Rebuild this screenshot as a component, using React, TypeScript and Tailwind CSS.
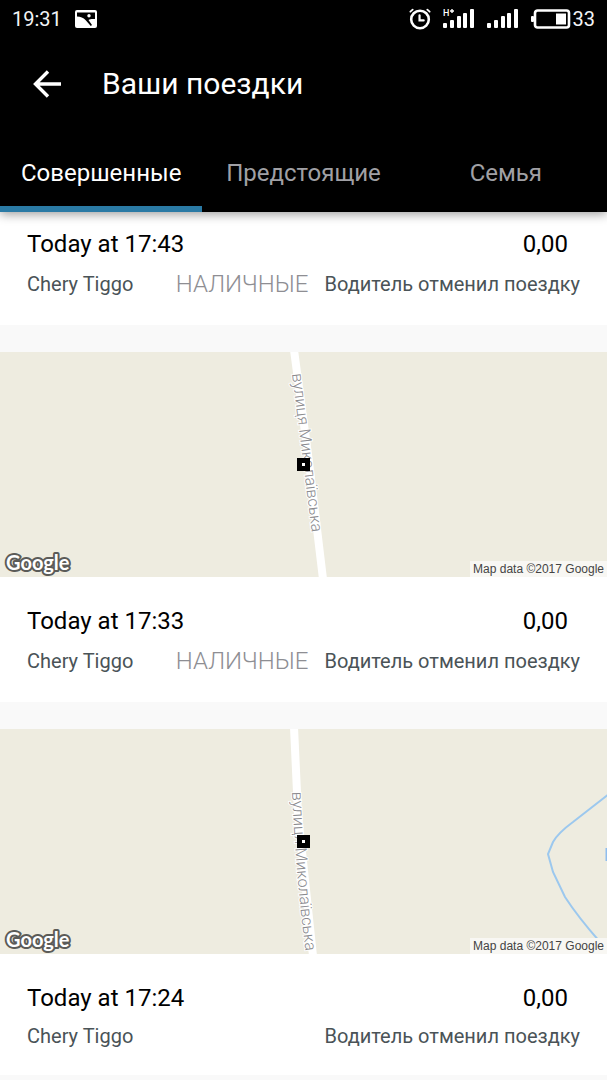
import React, { useState } from 'react';

type Trip = {
    time: string;
    price: string;
    car: string;
    payment?: string;
    status: string;
    map?: React.ReactNode;
};

const TABS = ['Совершенные', 'Предстоящие', 'Семья'];

const SignalBars = ({ network }: { network?: string }) => (
    <svg width="32" height="22" viewBox="0 0 32 22" fill="#fff" aria-hidden="true">
        {network && (
            <>
                <text x="0" y="8" fontSize="9" fontWeight="500">{network}</text>
                <path d="M7 3h4M9 1v4" stroke="#fff" strokeWidth="1.400" />
            </>
        )}
        <rect x="0" y="15" width="4" height="5" rx="1" />
        <rect x="7" y="12" width="4" height="8" rx="1" />
        <rect x="14" y="8" width="4" height="12" rx="1" />
        <rect x="20" y="5" width="4" height="15" rx="1" />
        <rect x="27" y="1" width="4" height="19" rx="1" />
    </svg>
);

const StatusBar = () => (
    <div className="flex h-[38px] items-center px-3 text-xl text-gray-100">
        <span>19:31</span>
        <svg className="ml-3" width="24" height="20" viewBox="0 0 24 20" aria-hidden="true">
            <rect x="1" y="1" width="22" height="18" rx="2" fill="#fff" />
            <path d="M3 3.500h18v6.500c-3-.3-5 0-6.500 1l3.500 5-1.200 1-5.300-6C9.500 9 6.500 7.600 3 7.600z" fill="#000" />
            <circle cx="15" cy="6.800" r="1.700" fill="#fff" />
        </svg>
        <div className="ml-auto flex items-center">
            <svg width="22" height="22" viewBox="0 0 24 24" fill="none" stroke="#fff" strokeLinecap="round" aria-hidden="true">
                <circle cx="12" cy="12.500" r="9.600" strokeWidth="2.800" />
                <path d="M11.500 8v5.500H16" strokeWidth="2.400" />
                <path d="M1.500 4 4 1.800M22.500 4 20 1.800" strokeWidth="2" />
            </svg>
            <div className="ml-3 flex gap-3">
                <SignalBars network="H" />
                <SignalBars />
            </div>
            <svg className="ml-3" width="40" height="20" viewBox="0 0 40 20" aria-hidden="true">
                <rect x="4" y="1.500" width="34" height="17" rx="2.500" fill="none" stroke="#fff" strokeWidth="2.600" />
                <rect x="0" y="7" width="3" height="6" rx="1" fill="#fff" />
                <rect x="25" y="4.500" width="10" height="11" fill="#fff" />
            </svg>
            <span className="ml-[2px]">33</span>
        </div>
    </div>
);

const StreetMap = ({ id, road, label, children }: { id: string; road: string; label: string; children?: React.ReactNode }) => (
    <div className="relative h-[225px] bg-[#eeece0]">
        <svg className="h-full w-full" viewBox="0 0 607 225" preserveAspectRatio="xMidYMid slice">
            {children}
            <path d={road} fill="none" stroke="#fff" strokeWidth="8" />
            <path id={id} d={label} fill="none" />
            <text fontSize="16" fill="#8a8a8e" stroke="#fff" strokeWidth="2" paintOrder="stroke" fontWeight="300">
                <textPath href={`#${id}`}>вулиця Миколаївська</textPath>
            </text>
            <rect x="297" y="106" width="13" height="13" fill="#000" />
            <rect x="302" y="111" width="3" height="3" fill="#fff" />
        </svg>
        <svg className="absolute bottom-0 left-1" width="72" height="28" viewBox="0 0 72 28">
            <text
                x="2"
                y="21"
                fontSize="20"
                fontWeight="700"
                fill="#fff"
                stroke="#5b5b58"
                strokeWidth="4"
                strokeLinejoin="round"
                paintOrder="stroke"
                fontFamily="Lato, sans-serif"
            >
                Google
            </text>
        </svg>
        <span className="absolute right-0 bottom-0 bg-[#f8f7f3] px-[3px] font-['Liberation_Sans',sans-serif] text-xs leading-4 text-[#444]">
            Map data ©2017 Google
        </span>
    </div>
);

const TRIPS: Trip[] = [
    { time: 'Today at 17:43', price: '0,00', car: 'Chery Tiggo', payment: 'НАЛИЧНЫЕ', status: 'Водитель отменил поездку' },
    {
        time: 'Today at 17:33',
        price: '0,00',
        car: 'Chery Tiggo',
        payment: 'НАЛИЧНЫЕ',
        status: 'Водитель отменил поездку',
        map: <StreetMap id="street-1733" road="M294 -2 L309 110 L323 227" label="M292 22 L312 182" />,
    },
    {
        time: 'Today at 17:24',
        price: '0,00',
        car: 'Chery Tiggo',
        status: 'Водитель отменил поездку',
        map: (
            <StreetMap id="street-1724" road="M294 -2 L298 85 L313 227" label="M292 63 Q296 150 306 226">
                <path d="M609 65 L573 93 Q558 104 553 113 L548 125 L553 143 L565 168 Q578 188 600 213" fill="none" stroke="#9cc8ee" strokeWidth="2" />
                <path d="M607 119v13" stroke="#8fbdee" strokeWidth="3" />
            </StreetMap>
        ),
    },
];

const TripCard = ({ trip }: { trip: Trip }) => (
    <article className="bg-white">
        {trip.map}
        <div className="px-[27px] pt-7 pb-[25px]">
            <div className="flex items-center justify-between pr-3 text-2xl leading-8 text-black">
                <h2>{trip.time}</h2>
                <span>{trip.price}</span>
            </div>
            <div className="mt-2 flex items-center text-xl leading-7 text-[#4a5357]">
                <span>{trip.car}</span>
                <div className="ml-auto flex items-center gap-4">
                    {trip.payment && <span className="text-2xl leading-8 font-light text-[#8e8e93]">{trip.payment}</span>}
                    <span>{trip.status}</span>
                </div>
            </div>
        </div>
    </article>
);

export default function App() {
    const [activeTab, setActiveTab] = useState(0);

    return (
        <div className="min-h-screen bg-[#f9f9f9] font-[Roboto,sans-serif]">
            <header className="relative z-10 bg-black text-white shadow-[0_2px_10px_rgba(0,0,0,0.4)]">
                <StatusBar />
                <div className="flex h-[92px] items-center pl-8">
                    <button type="button" aria-label="Назад">
                        <svg width="30" height="30" viewBox="0 0 30 30" fill="none" stroke="#fff" strokeWidth="3.400">
                            <path d="M29 15H4M16 2.500 3.500 15 16 27.500" />
                        </svg>
                    </button>
                    <h1 className="ml-10 text-3xl">Ваши поездки</h1>
                </div>
                <div role="tablist" className="grid grid-cols-3">
                    {TABS.map((tab, i) => (
                        <button
                            key={tab}
                            type="button"
                            role="tab"
                            aria-selected={i === activeTab}
                            onClick={() => setActiveTab(i)}
                            className={`h-[82px] border-b-[6px] pt-[10px] text-2xl ${i === activeTab ? 'border-[#2a7aa5] text-white' : 'border-transparent text-[#a0a0a5]'}`}
                        >
                            {tab}
                        </button>
                    ))}
                </div>
            </header>

            {/* the first trip is scrolled slightly under the header */}
            <main className="-mt-3 flex flex-col gap-[27px]">
                {TRIPS.map((trip) => (
                    <TripCard key={trip.time} trip={trip} />
                ))}
            </main>
        </div>
    );
}
